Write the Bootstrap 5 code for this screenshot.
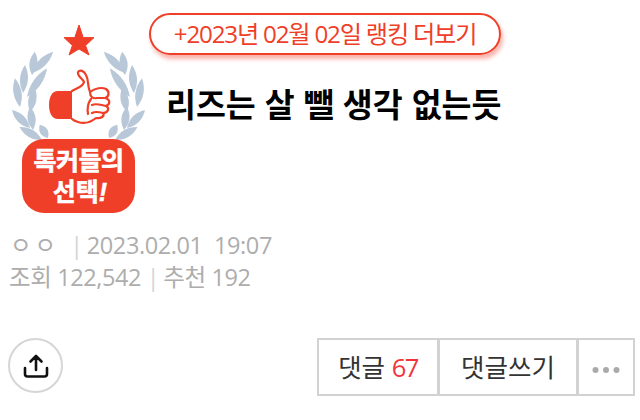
<!DOCTYPE html>
<html lang="ko">
<head>
    <meta charset="UTF-8">
    <title>리즈는 살 뺄 생각 없는듯</title>
    <link href="https://cdn.jsdelivr.net/npm/bootstrap@5.3.0/dist/css/bootstrap.min.css" rel="stylesheet">
    <style>
        body {
            background: #fff;
            font-family: "Open Sans", "Noto Sans CJK KR", sans-serif;
            overflow: hidden;
        }
        .post-head {
            height: 222px;
        }
        .post-logo {
            width: 150px;
            height: 222px;
            flex: none;
        }
        .logo-text {
            font-family: "Liberation Sans", "Noto Sans CJK KR", sans-serif;
            font-weight: 700;
            font-size: 25px;
            fill: #fff;
            stroke: #fff;
            stroke-width: .6px;
        }
        .rank-link {
            width: 352px;
            height: 42px;
            margin: 13px 0 0 -1px;
            border: 2px solid #ef3f28;
            border-radius: 21px;
            box-shadow: 2px 4px 4px rgba(239, 63, 40, .4);
            color: #ef3f28;
            font-size: 24.200px;
            letter-spacing: -1.200px;
            line-height: 38px;
            text-align: center;
            text-decoration: none;
        }
        .post-title {
            margin: 26px 0 0 16px;
            font-family: "Noto Sans CJK KR", sans-serif;
            font-size: 32.500px;
            font-weight: 700;
            line-height: 44px;
            color: #000;
        }
        .post-meta {
            margin-top: 7px;
            padding-left: 9px;
            color: #adadad;
            font-size: 23.500px;
            line-height: 32px;
            letter-spacing: -.4px;
        }
        .meta-nick {
            margin: 0 11px 0 1px;
            letter-spacing: 3px;
        }
        .meta-bar {
            margin-right: 4px;
            color: #d4d4d4;
        }
        .post-actions {
            margin-top: 45px;
            padding: 0 5px 0 8px;
        }
        .share-btn {
            width: 55px;
            height: 55px;
            padding: 0;
            border: 2px solid #d6d6d6;
            background: #fff;
        }
        .action-btn {
            height: 58px;
            border: 2px solid #d2d2d2;
            border-radius: 0 !important;
            background: #fff;
            color: #333;
            font-size: 25.500px;
            padding: 0;
        }
        .btn-comment { width: 122px; flex: none !important; }
        .btn-write { width: 140px; flex: none !important; }
        .btn-more { width: 58px; flex: none !important; color: #aaa; }
        .count-red {
            color: #f1343c;
            letter-spacing: -1.500px;
        }
    </style>
</head>
<body>
    <div class="d-flex post-head">
        <svg class="post-logo" viewBox="0 0 150 222">
            <defs>
                <path id="leaf" d="M0 0Q8 -13 0 -26Q-8 -13 0 0Z" fill="#b8c8d8"/>
                <g id="wreath">
                    <use href="#leaf" transform="translate(32 73) rotate(45) scale(1 1.150)"/>
                    <use href="#leaf" transform="translate(32 75) rotate(7) scale(1 .9)"/>
                    <use href="#leaf" transform="translate(27 97) rotate(35) scale(1 1.350)"/>
                    <use href="#leaf" transform="translate(23 93) rotate(4) scale(1 1.080)"/>
                    <use href="#leaf" transform="translate(30 112) rotate(11) scale(1 .96)"/>
                    <use href="#leaf" transform="translate(20 107) rotate(-10) scale(1 1.120)"/>
                    <use href="#leaf" transform="translate(33 130) rotate(-7) scale(1 .9)"/>
                    <use href="#leaf" transform="translate(30 128) rotate(-45) scale(1 .98)"/>
                    <use href="#leaf" transform="translate(48 138) rotate(-32) scale(1 .6)"/>
                    <use href="#leaf" transform="translate(42 140) rotate(-60) scale(1 1)"/>
                </g>
            </defs>
            <use href="#wreath"/>
            <use href="#wreath" transform="translate(157 0) scale(-1 1)"/>
            <path d="M79 25L83.200 37.600L94 37.600L85.600 45.500L89 55L79 49L69 55L72.400 45.500L64 37.600L74.800 37.600Z" fill="#ef3f28" stroke="#ef3f28" stroke-linejoin="round"/>
            <path d="M72 91H58C52 91 49 97 49 105C49 113 52 119 58 119H72Z" fill="#ef3f28"/>
            <path d="M72 91C77 88 83 87 84 82C82 78 77 76 78 72C80 69 84 71 86 75C89 80 87 85 90 92C95 88 102 87 106 89C110 92 109 97 105 98C110 99 111 104 106 106C110 108 108 113 103 113C105 116 101 119 96 118C91 122 84 124 78 122C75 121 73 120 72 119M90 92C90 97 93 99 97 98H105M92 105C96 103 101 105 106 106M92 113C96 111 99 112 103 113M91 99C88 103 87 108 88 114" fill="none" stroke="#ef3f28" stroke-width="2.200" stroke-linecap="round" stroke-linejoin="round"/>
            <rect x="22" y="139" width="113" height="74" rx="22" fill="#ef3f28"/>
            <text class="logo-text" x="78.500" y="170" text-anchor="middle" letter-spacing="-.5">톡커들의</text>
            <text class="logo-text" x="80" y="201" text-anchor="middle">선택<tspan font-style="italic">!</tspan></text>
        </svg>
        <div class="d-flex flex-column align-items-start">
            <a class="rank-link d-block" href="#">+2023년 02월 02일 랭킹 더보기</a>
            <h1 class="post-title">리즈는 살 뺄 생각 없는듯</h1>
        </div>
    </div>
    <div class="post-meta">
        <div><span class="meta-nick">ㅇㅇ</span><span class="meta-bar">|</span>2023.02.01&nbsp; 19:07</div>
        <div>조회 122,542 <span class="meta-bar">|</span>추천 192</div>
    </div>
    <div class="d-flex justify-content-between align-items-start post-actions">
        <button class="btn rounded-circle share-btn d-flex align-items-center justify-content-center" type="button" aria-label="공유">
            <svg width="26" height="26" viewBox="0 0 26 26" fill="none" stroke="#111" stroke-width="2.600" stroke-linecap="round" stroke-linejoin="round">
                <path d="M13 17V3M7.500 8.500L13 3L18.500 8.500M2 15V21C2 22.500 3 23.500 4.500 23.500H21.500C23 23.500 24 22.500 24 21V15"/>
            </svg>
        </button>
        <div class="btn-group">
            <button class="btn action-btn btn-comment" type="button">댓글 <span class="count-red">67</span></button>
            <button class="btn action-btn btn-write" type="button">댓글쓰기</button>
            <button class="btn action-btn btn-more" type="button" aria-label="더보기">
                <svg width="28" height="8" viewBox="0 0 28 8" fill="#aaa"><circle cx="3.500" cy="4" r="3"/><circle cx="14" cy="4" r="3"/><circle cx="24.500" cy="4" r="3"/></svg>
            </button>
        </div>
    </div>
    <script src="https://cdn.jsdelivr.net/npm/bootstrap@5.3.0/dist/js/bootstrap.bundle.min.js"></script>
</body>
</html>
